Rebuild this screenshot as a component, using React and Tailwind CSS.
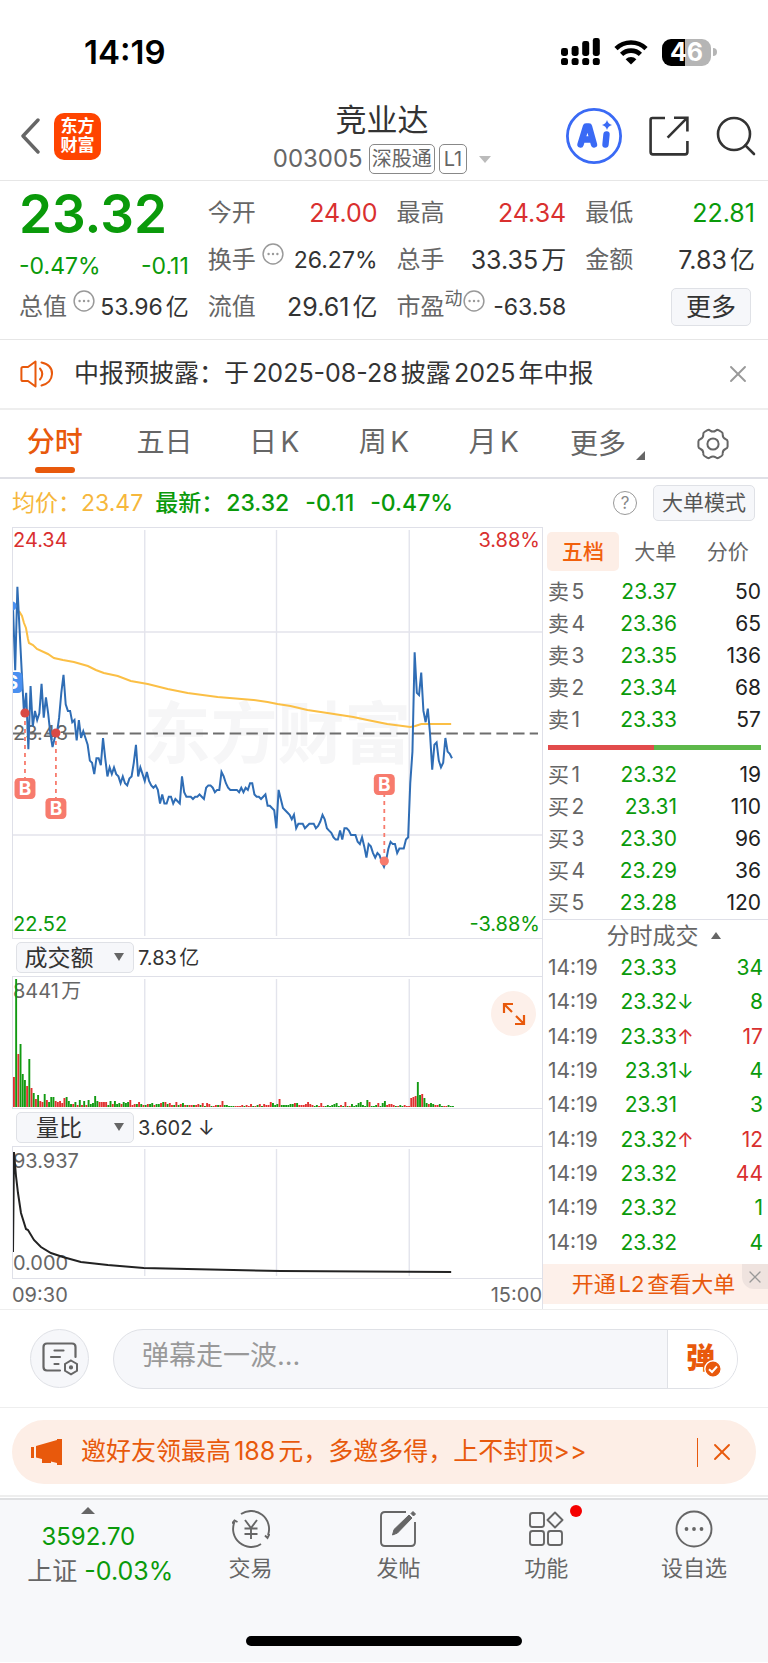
import { Search, X } from 'lucide-react'
import clsx from 'clsx'

// ── Market data ────────────────────────────────────────────────
// Minute prices, in cents from the previous close (23.43)
const PRICE_OFFSETS = [
    56, 28, 65, 46, 27, 9, 18, -7, 21, 3, 10, 6, 9, 22, 7, 16, 9, 0, -6, -2,
    0, 7, 18, 26, 13, 10, 10, 5, 6, -3, 6, -2, 1, -2, -5, -12, -13, -18, -11, -11,
    -14, -2, -11, -19, -15, -18, -15, -18, -19, -22, -19, -22, -23, -20, -19, -13, -5, -19, -15, -18,
    -21, -17, -21, -23, -24, -23, -25, -31, -27, -31, -31, -28, -28, -31, -29, -30, -31, -19, -26, -28,
    -28, -28, -29, -28, -28, -27, -28, -29, -24, -23, -23, -24, -26, -25, -25, -17, -19, -22, -24, -25,
    -25, -25, -25, -26, -24, -26, -24, -25, -22, -22, -27, -28, -28, -29, -28, -27, -32, -32, -33, -34,
    -42, -25, -29, -33, -34, -35, -36, -38, -36, -42, -40, -40, -40, -42, -41, -40, -40, -40, -42, -41,
    -39, -36, -38, -42, -43, -44, -46, -47, -47, -43, -47, -42, -42, -43, -45, -45, -45, -48, -49, -46,
    -50, -55, -49, -50, -53, -55, -53, -54, -57, -59, -56, -51, -48, -49, -49, -53, -51, -51, -51, -47,
    -46, -22, -8, 36, 18, 17, 27, 10, 5, 11, 0, -16, -5, -4, -12, -15, -13, -2, -8, -9,
    -11,
]

const AVERAGE_LINE =
    '6,83 9,88 11,95 13,100 15,111 16,115 20,117 24,121 35,126 41,130 50,132 61,134 75,138 83,142 91,145 105,148 118,153 135,156 155,161 175,165 205,169 241,172 255,174 265,176 278,178 295,182 315,185 341,189 355,192 375,196 398,199 403,198 409,196 439,196'

const RATIO_LINE =
    '0,105 1,5 3,29 5,46 8,66 13,82 15,83 21,93 28,100 38,106 50,110 68,115 95,118 131,121 175,122 268,124 439,125'

// Minute turnover, positive = falling (green), negative = rising (red)
const TURNOVER = [
    -30, 128, -53, 63, 33, 27, -21, 48, -19, 14, -8, 12, -6, -5, 13, -7, 5, 10, 10, -6,
    -5, -6, -4, -9, 10, 6, 3, -3, 5, -2, 7, -2, 6, -2, 7, 3, 4, 11, 6, -5,
    -5, -5, -5, 2, 6, -3, 6, 3, 4, -3, 5, 4, 5, -7, -2, -3, 3, -5, 3, -2,
    2, -3, 3, 4, -2, 3, 3, -4, 5, -5, 3, -4, -2, 2, -5, 2, -3, 4, -2, 2,
    -2, -2, 2, -2, -3, 2, -4, 1, -4, -3, 1, -1, -2, 2, -2, -6, 2, 2, 1, 1,
    1, -1, -1, -1, -2, 1, -2, -1, -3, 1, -1, 2, -3, 1, -3, -2, -2, -5, 4, 2,
    3, -8, 2, 2, 2, 2, 3, 3, -4, 4, -2, -2, -2, -3, -5, -3, -2, 1, 2, -1,
    -4, -1, 1, 2, 1, 2, 3, 4, 1, -2, 1, -5, 1, -1, 3, 1, 2, 4, 5, 2,
    1, 7, -5, 1, 1, 2, -4, 1, 4, 6, -2, -3, -3, -2, 1, -1, 2, 1, -2, -1,
    -1, -9, -10, -11, 25, 12, -13, 9, 4, -3, 4, 3, -2, -2, 3, 1, -1, -1, 2, 1,
    1,
]

const SELLS = [
    ['卖5', '23.37', 50],
    ['卖4', '23.36', 65],
    ['卖3', '23.35', 136],
    ['卖2', '23.34', 68],
    ['卖1', '23.33', 57],
]

const BUYS = [
    ['买1', '23.32', 19],
    ['买2', '23.31', 110],
    ['买3', '23.30', 96],
    ['买4', '23.29', 36],
    ['买5', '23.28', 120],
]

const TRADES = [
    { price: '23.33', volume: 34 },
    { price: '23.32', volume: 8, move: '↓' },
    { price: '23.33', volume: 17, move: '↑', up: true },
    { price: '23.31', volume: 4, move: '↓' },
    { price: '23.31', volume: 3 },
    { price: '23.32', volume: 12, move: '↑', up: true },
    { price: '23.32', volume: 44, up: true },
    { price: '23.32', volume: 1 },
    { price: '23.32', volume: 4 },
]

const STEP = 530 / 241

// ── Icons ──────────────────────────────────────────────────────
function DotsCircle({ className }) {
    return (
        <svg viewBox="0 0 24 24" fill="none" stroke="currentColor" className={className}>
            <circle cx="12" cy="12" r="10.8" strokeWidth="1.6" />
            <g fill="currentColor" stroke="none">
                <circle cx="7.2" cy="12" r="1.3" />
                <circle cx="12" cy="12" r="1.3" />
                <circle cx="16.8" cy="12" r="1.3" />
            </g>
        </svg>
    )
}

function Gear() {
    return (
        <svg viewBox="0 0 32 32" className="size-8" fill="none" stroke="#666" strokeWidth="2" strokeLinejoin="round">
            <path d="M10.5 2.2Q12 1.4 13.2 2.6Q16 4.6 18.8 2.6Q20 1.4 21.5 2.2L24.6 4Q26 4.9 25.7 6.6Q25.6 10 28.8 11.2Q30.6 11.8 30.6 13.4V18.6Q30.6 20.2 28.8 20.8Q25.6 22 25.7 25.4Q26 27.1 24.6 28L21.5 29.8Q20 30.6 18.8 29.4Q16 27.4 13.2 29.4Q12 30.6 10.5 29.8L7.4 28Q6 27.1 6.3 25.4Q6.4 22 3.2 20.8Q1.4 20.2 1.4 18.6V13.4Q1.4 11.8 3.2 11.2Q6.4 10 6.3 6.6Q6 4.9 7.4 4Z" />
            <circle cx="16" cy="16" r="5.6" />
        </svg>
    )
}

// ── Status bar and header ──────────────────────────────────────
function StatusBar() {
    return (
        <div className="flex h-[88px] items-center justify-between pt-4 pr-[51px] pl-[84px] text-black">
            <span className="text-[33px] leading-9 font-semibold">14:19</span>
            <div className="flex items-center gap-[14px]">
                <svg viewBox="0 0 40 28" className="h-7 w-10">
                    {[8, 10, 15, 18].map((h, i) => (
                        <g key={h}>
                            <rect x={1 + i * 10.6} y={18 - h} width="7" height={h} rx="2.4" />
                            <rect x={1 + i * 10.6} y="20" width="7" height="7" rx="2.6" />
                        </g>
                    ))}
                </svg>
                <svg viewBox="0 0 34 26" className="h-[26px] w-[34px]">
                    <g fill="none" stroke="#000" strokeWidth="4.6">
                        <path d="M2 9.6A21.5 21.5 0 0 1 32 9.6" />
                        <path d="M7.6 15.4A13.5 13.5 0 0 1 26.4 15.4" />
                    </g>
                    <path d="M17 25.6L11.6 20.2A7.8 7.8 0 0 1 22.4 20.2Z" />
                </svg>
                <div className="flex items-center">
                    <span className="flex h-[27px] w-[49px] items-center justify-center rounded-[9px] bg-linear-to-r from-black from-46% to-[#b5b5b5] to-46% text-[25px] leading-6 font-bold text-white">
                        46
                    </span>
                    <span className="ml-0.5 h-2 w-1 rounded-r-full bg-[#b5b5b5]" />
                </div>
            </div>
        </div>
    )
}

function Header() {
    return (
        <header className="grid h-[93px] grid-cols-[1fr_auto_1fr] items-center border-b border-[#e6e6e6] pt-1">
            <div className="flex items-center gap-[14px] pl-5">
                <button aria-label="返回">
                    <svg viewBox="0 0 20 36" className="h-9 w-5" fill="none" stroke="#666" strokeWidth="3.4" strokeLinecap="round" strokeLinejoin="round">
                        <path d="M18 2L3 18L18 34" />
                    </svg>
                </button>
                <a href="#home" className="flex size-[47px] flex-col items-center justify-center rounded-[10px] bg-[#ff4400] text-[17px] leading-[19px] font-bold text-white">
                    <span>东方</span>
                    <span>财富</span>
                </a>
            </div>
            <div className="flex flex-col items-center pr-1">
                <h1 className="text-[31px] leading-[46px] text-[#333]">竞业达</h1>
                <div className="flex items-center text-[#666]">
                    <span className="text-[24px] leading-8">003005</span>
                    <span className="ml-1.5 rounded-[5px] border border-[#888] px-0.5 text-[20px] leading-7">深股通</span>
                    <span className="ml-1 rounded-[5px] border border-[#888] px-1 text-[20px] leading-7">L1</span>
                    <svg viewBox="0 0 12 7" className="ml-3 h-[7px] w-3 fill-[#bbb]">
                        <path d="M0 0H12L6 7Z" />
                    </svg>
                </div>
            </div>
            <div className="flex items-center justify-end gap-[27px] pr-3">
                <button aria-label="AI">
                    <svg viewBox="0 0 56 56" className="size-14">
                        <circle cx="28" cy="28" r="26.6" fill="none" stroke="#3a6af5" strokeWidth="2.8" />
                        <g fill="none" stroke="#3a6af5" strokeLinecap="round" strokeLinejoin="round" strokeWidth="6.4">
                            <path d="M14.500 36.500L20 18.500H23L28 36.500M18 31.500H26" />
                            <path d="M40.500 26.500L39.500 36.500" />
                        </g>
                        <path d="M41 12Q42 16 46 17Q42 18 41 22Q40 18 36 17Q40 16 41 12Z" fill="#3a6af5" />
                    </svg>
                </button>
                <button aria-label="分享">
                    <svg viewBox="0 0 40 40" className="size-10" fill="none" stroke="#333" strokeWidth="2.6">
                        <path d="M16 2H3.4Q1.6 2 1.6 4V36Q1.6 38.4 4 38.4H36Q38.4 38.4 38.4 36V25" />
                        <path d="M18.6 21.6L37.6 2.4M25 1.8H38.4V15.6" />
                    </svg>
                </button>
                <button aria-label="搜索">
                    <Search className="-mx-1 size-12 text-[#333]" strokeWidth={1.3} />
                </button>
            </div>
        </header>
    )
}

// ── Quote summary ──────────────────────────────────────────────
function Stat({ label, value, tone = 'text-[#333]', hint, sup }) {
    return (
        <div className="flex items-center justify-between whitespace-nowrap">
            <span className="flex items-center text-[24px] text-[#666]">
                {label}
                {sup && <sup className="top-[-8px] text-[18px] leading-none">{sup}</sup>}
                {hint && <DotsCircle className={clsx('mb-3 size-[22px] text-[#999]', !sup && 'ml-1.5')} />}
            </span>
            <span className={clsx(tone, hint ? 'text-[23px]' : 'text-[25px]')}>{value}</span>
        </div>
    )
}

function Quote() {
    return (
        <section className="grid auto-rows-[47px] grid-cols-4 gap-x-[19px] border-b border-[#e6e6e6] pt-2 pr-[13px] pb-[9px] pl-[19px] leading-8">
            <div className="flex items-center pt-1 text-[53px] leading-[47px] font-semibold text-[#0a9a0a]">23.32</div>
            <Stat label="今开" value="24.00" tone="text-[#d9302f]" />
            <Stat label="最高" value="24.34" tone="text-[#d9302f]" />
            <Stat label="最低" value="22.81" tone="text-[#0a9a0a]" />
            <div className="flex items-center justify-between pt-3 text-[23px] text-[#0a9a0a]">
                <span>-0.47%</span>
                <span>-0.11</span>
            </div>
            <Stat label="换手" value="26.27%" hint />
            <Stat label="总手" value="33.35万" />
            <Stat label="金额" value="7.83亿" />
            <Stat label="总值" value="53.96亿" hint />
            <Stat label="流值" value="29.61亿" />
            <Stat label="市盈" sup="动" value="-63.58" hint />
            <div className="flex items-center justify-end pr-1">
                <button className="rounded-[5px] border border-[#dfe1e6] bg-[#f6f7fa] px-[14px] text-[25px] leading-9 text-[#333]">更多</button>
            </div>
        </section>
    )
}

function Notice() {
    return (
        <section className="flex h-[70px] items-center border-b-2 border-[#eee] pr-5 pl-5 text-[25px] text-[#333]">
            <svg viewBox="0 0 34 28" className="mr-5 h-7 w-[34px]" fill="none" stroke="#e8590c" strokeWidth="2" strokeLinejoin="round" strokeLinecap="round">
                <path d="M15.5 1.5V26.5L8 21H3Q1.4 21 1.4 19.4V8.6Q1.4 7 3 7H8Z" />
                <path d="M20 8.5Q24.5 14 20 19.5M21.5 2.5Q32.5 5 32 14T21.5 25.5" />
            </svg>
            <a href="#notice" className="flex-1">中报预披露：于2025-08-28披露2025年中报</a>
            <button aria-label="关闭">
                <X className="-mr-1 size-7 text-[#999]" strokeWidth={1.6} />
            </button>
        </section>
    )
}

function PeriodTabs() {
    return (
        <nav className="grid h-[69px] grid-cols-7 border-b-2 border-[#dfe0e6] text-[28px] text-[#666]">
            {['分时', '五日', '日K', '周K', '月K'].map((tab, i) => (
                <button
                    key={tab}
                    className={clsx(
                        'flex flex-col items-center justify-end pb-1',
                        i === 0 && 'font-medium text-[#e8590c]'
                    )}
                >
                    <span className="leading-[46px]">{tab}</span>
                    <span className={clsx('mt-0.5 h-1.5 w-10 rounded-full', i === 0 && 'bg-[#e8590c]')} />
                </button>
            ))}
            <button className="flex items-center justify-center pl-2">
                更多
                <svg viewBox="0 0 9 9" className="mt-6 ml-2.5 size-[9px] fill-[#666]">
                    <path d="M9 0V9H0Z" />
                </svg>
            </button>
            <button aria-label="设置" className="flex items-center justify-center">
                <Gear />
            </button>
        </nav>
    )
}

// ── Charts ─────────────────────────────────────────────────────
function GridColumns({ height }) {
    return (
        <g stroke="#e3e4ec" strokeWidth="1.4">
            {[132, 264, 397].map(x => (
                <line key={x} x1={x} x2={x} y1="2" y2={height - 2} />
            ))}
        </g>
    )
}

function Marker({ x, y, badgeY, letter, color, dot }) {
    const above = badgeY < y
    return (
        <g>
            <line x1={x} x2={x} y1={y} y2={above ? badgeY + 21 : badgeY} stroke={color} strokeWidth="1.8" strokeDasharray="4 4" />
            <circle cx={x} cy={y} r="4.6" fill={dot || color} />
            <rect x={x - 10.5} y={badgeY} width="21" height="21" rx="4.5" fill={color} />
            <text x={x} y={badgeY + 17} textAnchor="middle" fill="#fff" fontSize="19" fontWeight="700">
                {letter}
            </text>
        </g>
    )
}

function PriceChart() {
    const line = PRICE_OFFSETS.map((d, i) => `${(i * STEP).toFixed(1)},${(205.5 - d * 2.257).toFixed(1)}`).join(' ')
    return (
        <div className="relative border-y border-l border-[#dfe0e8] text-[20px] leading-6">
            <svg viewBox="0 0 530 410" preserveAspectRatio="none" className="block h-[410px] w-full">
                <text x="265" y="230" textAnchor="middle" fontSize="67" fontWeight="700" fill="#f6f6f7">
                    东方财富
                </text>
                <GridColumns height={410} />
                <path d="M0 104H530M0 307H530" stroke="#e3e4ec" strokeWidth="1.4" />
                <path d="M0 205.5H526" stroke="#6e6e6e" strokeWidth="2" strokeDasharray="11.5 5.2" />
                <text x="0" y="212" fontSize="20" fill="#666">23.43</text>
                <polyline points={AVERAGE_LINE} fill="none" stroke="#fbbf45" strokeWidth="2" />
                <polyline points={line} fill="none" stroke="#2f6db5" strokeWidth="2" />
                <Marker x={-1} y={78} badgeY={144} letter="S" color="#4a90f0" />
                <Marker x={12} y={185} badgeY={250} letter="B" color="#f77b6d" dot="#d94a45" />
                <Marker x={43} y={205} badgeY={270} letter="B" color="#f77b6d" dot="#d94a45" />
                <Marker x={372} y={333} badgeY={246} letter="B" color="#f77b6d" />
            </svg>
            <div className="absolute inset-0 flex flex-col justify-between pr-0.5">
                <div className="flex justify-between text-[#d9302f]">
                    <span>24.34</span>
                    <span>3.88%</span>
                </div>
                <div className="flex justify-between pb-0.5 text-[#0a9a0a]">
                    <span>22.52</span>
                    <span>-3.88%</span>
                </div>
            </div>
        </div>
    )
}

function IndicatorBar({ name, options, value }) {
    return (
        <div className="flex h-[37px] items-center gap-1 pl-1 text-[20px] text-[#333]">
            <div className="relative flex">
                <select
                    aria-label={name}
                    defaultValue={name}
                    className="h-[31px] w-[118px] appearance-none rounded-[5px] border border-[#dfe1e6] bg-[#f6f7fa] pr-8 text-center text-[23px] leading-7"
                >
                    {options.map(o => (
                        <option key={o}>{o}</option>
                    ))}
                </select>
                <svg viewBox="0 0 10 8" className="pointer-events-none absolute top-[11px] right-[10px] h-2 w-2.5 fill-[#666]">
                    <path d="M0 0H10L5 8Z" />
                </svg>
            </div>
            <span>{value}</span>
        </div>
    )
}

function TurnoverChart() {
    return (
        <div className="relative border-y border-l border-[#dfe0e8]">
            <svg viewBox="0 0 530 131" preserveAspectRatio="none" className="block h-[131px] w-full">
                <GridColumns height={131} />
                <text x="0" y="21" fontSize="20" fill="#666">8441万</text>
                {TURNOVER.map((v, i) => (
                    <rect
                        key={i}
                        x={i * STEP}
                        y={130 - Math.abs(v)}
                        width="1.9"
                        height={Math.abs(v)}
                        fill={v > 0 ? '#129a12' : '#e03131'}
                    />
                ))}
            </svg>
            <button aria-label="全屏" className="absolute top-[14px] right-1.5 flex size-[45px] items-center justify-center rounded-full bg-[#fdf0ea]">
                <svg viewBox="0 0 24 24" className="size-6" fill="none" stroke="#e8590c" strokeWidth="2.2">
                    <path d="M2 11V2H11M2 2L10 10M22 13V22H13M22 22L14 14" />
                </svg>
            </button>
        </div>
    )
}

function RatioChart() {
    return (
        <div className="border-y border-l border-[#dfe0e8]">
            <svg viewBox="0 0 530 131" preserveAspectRatio="none" className="block h-[131px] w-full">
                <GridColumns height={131} />
                <g fontSize="20" fill="#666">
                    <text x="0" y="21">93.937</text>
                    <text x="0" y="123">0.000</text>
                </g>
                <polyline points={RATIO_LINE} fill="none" stroke="#222" strokeWidth="2" />
            </svg>
        </div>
    )
}

// ── Order book ─────────────────────────────────────────────────
function BookTable({ rows }) {
    return (
        <table className="w-full table-fixed">
            <tbody>
                {rows.map(([side, price, volume]) => (
                    <tr key={side} className="h-8">
                        <td className="w-14 text-[#666]">{side}</td>
                        <td className="w-[73px] text-right text-[#0a9a0a]">{price}</td>
                        <td className="text-right text-[#222]">{volume}</td>
                    </tr>
                ))}
            </tbody>
        </table>
    )
}

function OrderPanel() {
    return (
        <aside className="flex w-[226px] shrink-0 flex-col border-l border-[#dfe0e8] text-[21px] leading-7">
            <div className="flex pr-1 pl-1 pt-[5px] text-[#666]">
                <button className="h-[39px] w-[72px] rounded-[5px] bg-[#fdeee6] font-medium text-[#f2600c]">五档</button>
                <button className="h-[39px] flex-1">大单</button>
                <button className="h-[39px] flex-1">分价</button>
            </div>
            <div className="pt-[5px] pr-[7px] pl-[5px]">
                <BookTable rows={SELLS} />
                <div className="flex h-[23px] items-center">
                    <div className="h-[5px] w-full bg-linear-to-r from-[#e24b4b] from-50% to-[#5db84a] to-50%" />
                </div>
                <BookTable rows={BUYS} />
            </div>
            <button className="flex h-8 items-center justify-center gap-3 border-t border-[#dfe0e8] pl-4 text-[23px] text-[#666]">
                分时成交
                <svg viewBox="0 0 10 7" className="h-[7px] w-2.5 fill-[#666]">
                    <path d="M0 7H10L5 0Z" />
                </svg>
            </button>
            <div className="pr-[5px] pl-[5px]">
                <table className="h-[309px] w-full table-fixed">
                    <tbody>
                        {TRADES.map((t, i) => (
                            <tr key={i}>
                                <td className="w-14 text-[#666]">14:19</td>
                                <td className="w-[73px] text-right text-[#0a9a0a]">{t.price}</td>
                                <td className={clsx('w-5 text-[20px]', t.up ? 'text-[#d9302f]' : 'text-[#0a9a0a]')}>{t.move}</td>
                                <td className={clsx('text-right', t.up ? 'text-[#d9302f]' : 'text-[#0a9a0a]')}>{t.volume}</td>
                            </tr>
                        ))}
                    </tbody>
                </table>
            </div>
            <div className="relative mt-auto mb-[5px] bg-[#fdf0ea]">
                <a href="#level2" className="block pr-1 text-center text-[22px] leading-[40px] text-[#e8590c]">
                    开通L2查看大单
                </a>
                <button aria-label="关闭" className="absolute top-0 right-0 flex h-[25px] w-[26px] items-center justify-center rounded-bl-[12px] bg-[#efe3df]">
                    <X className="size-5 text-[#999]" strokeWidth={1.6} />
                </button>
            </div>
        </aside>
    )
}

function ChartArea() {
    return (
        <section>
            <div className="flex h-12 items-center pr-[13px] pl-3 text-[23px] whitespace-nowrap">
                <span className="text-[#f6b73c]">均价：</span>
                <span className="text-[#f6b73c]">23.47</span>
                <span className="ml-3 font-medium text-[#0a9a0a]">最新：</span>
                <span className="ml-0.5 font-medium text-[#0a9a0a]">23.32</span>
                <span className="ml-4 font-medium text-[#0a9a0a]">-0.11</span>
                <span className="ml-4 font-medium text-[#0a9a0a]">-0.47%</span>
                <button className="ml-auto size-6 rounded-full border-[1.5px] border-[#999] text-[17px] leading-5 text-[#888]">?</button>
                <button className="ml-4 rounded-[5px] border border-[#dfe1e6] bg-[#f6f7fa] px-2 text-[21px] leading-[34px] text-[#555]">大单模式</button>
            </div>
            <div className="flex border-b border-[#eee]">
                <div className="min-w-0 flex-1 pl-3">
                    <PriceChart />
                    <IndicatorBar name="成交额" options={['成交额', '成交量']} value="7.83亿" />
                    <TurnoverChart />
                    <IndicatorBar name="量比" options={['量比', 'MACD']} value="3.602 ↓" />
                    <RatioChart />
                    <div className="flex h-[30px] items-center justify-between pt-0.5 text-[20px] text-[#666]">
                        <span>09:30</span>
                        <span>15:00</span>
                    </div>
                </div>
                <OrderPanel />
            </div>
        </section>
    )
}

// ── Comment box, promo, bottom bar ─────────────────────────────
function CommentBar() {
    return (
        <section className="flex h-[98px] items-center gap-6 border-b border-[#eee] pr-[30px] pl-[30px]">
            <button aria-label="弹幕设置" className="flex size-[59px] shrink-0 items-center justify-center rounded-full border border-[#dfe1e6] bg-[#f6f7fa]">
                <svg viewBox="0 0 36 34" className="h-[34px] w-9" fill="none" stroke="#666" strokeWidth="2.2" strokeLinecap="round">
                    <path d="M18 28.5H5Q1.5 28.5 1.5 25V5Q1.5 1.5 5 1.5H30Q33.5 1.5 33.5 5V15" />
                    <path d="M12.5 8.5H21.5M9 15H18M12.5 22H16.5" />
                    <path d="M29 18.5L35 22V28.8L29 32.4L23 28.8V22Z" strokeWidth="2" />
                    <circle cx="29" cy="25.4" r="1" />
                </svg>
            </button>
            <div className="flex h-[60px] flex-1 overflow-hidden rounded-full border border-[#dfe1e6] bg-[#f6f7fa]">
                <input
                    aria-label="弹幕"
                    placeholder="弹幕走一波..."
                    className="min-w-0 flex-1 pb-1 pl-7 text-[27px] outline-none placeholder:text-[#999]"
                />
                <button aria-label="发送弹幕" className="relative w-[70px] border-l border-[#dfe1e6] bg-white pr-1 text-[29px] font-black text-[#e8590c]">
                    弹
                    <svg viewBox="0 0 18 18" className="absolute right-[15px] bottom-2.5 size-[18px]">
                        <circle cx="9" cy="9" r="8.2" fill="#e8590c" stroke="#fff" strokeWidth="1.4" />
                        <path d="M5 9.2L8 12L13 6.5" fill="none" stroke="#fff" strokeWidth="2" />
                    </svg>
                </button>
            </div>
        </section>
    )
}

function Promo() {
    return (
        <section className="border-b-2 border-[#eee] px-3 pt-3 pb-[11px]">
            <div className="flex h-16 items-center rounded-full bg-[#fdeee6] pr-5 pl-[19px] text-[25px] text-[#e8590c]">
                <svg viewBox="0 0 32 26" className="mr-[18px] h-[26px] w-8" fill="#e8590c">
                    <path d="M0 8H3V19H0ZM5 7L26 1V0H31V26H26V24L20 22.5V24H11V20L5 18.5Z" />
                </svg>
                <a href="#invite" className="flex-1">邀好友领最高188元，多邀多得，上不封顶&gt;&gt;</a>
                <span className="mr-2.5 h-[29px] w-px bg-[#e8590c]" />
                <button aria-label="关闭">
                    <X className="size-7" strokeWidth={1.6} />
                </button>
            </div>
        </section>
    )
}

function NavItem({ label, dot, children }) {
    return (
        <button className="flex flex-1 flex-col items-center pt-[10px]">
            <span className="relative">
                <svg viewBox="0 0 38 38" className="size-[38px]" fill="none" stroke="#666" strokeWidth="1.9">
                    {children}
                </svg>
                {dot && <span className="absolute top-[-5px] right-[-17px] size-3 rounded-full bg-[#f50000]" />}
            </span>
            <span className="pt-1 text-[22px] leading-8 text-[#666]">{label}</span>
        </button>
    )
}

function BottomBar() {
    return (
        <footer className="mt-px border-t-2 border-[#dfe0e2] bg-[#f7f8fa]">
            <div className="flex h-[136px]">
                <button className="flex w-[23%] flex-col items-center pt-[7px] text-[24px] leading-[35px] text-[#0a9a0a]">
                    <svg viewBox="0 0 14 7" className="mb-[5px] h-[7px] w-[14px] fill-[#666]">
                        <path d="M0 7H14L7 0Z" />
                    </svg>
                    <span>3592.70</span>
                    <span className="pl-6 text-[25px]"><span className="text-[#666]">上证</span> -0.03%</span>
                </button>
                <NavItem label="交易">
                    <path d="M9 4A18 18 0 0 1 36 25M37.5 24L35.5 28L33 25.5M29 34A18 18 0 0 1 2.5 12M0 13.5L2.5 10.5L5.5 12" />
                    <path d="M13 10L19 18L25 10M19 18V29M12.5 18.5H25.5M12.5 24H25.5" />
                </NavItem>
                <NavItem label="发帖">
                    <path d="M27 2H6Q2 2 2 6V32Q2 36 6 36H32Q36 36 36 32V12" />
                    <path d="M13.5 25L15 19.5L30 5L33 8L18.5 23ZM32 3.5L34 1.5L36.5 4L34.5 6Z" fill="#666" strokeWidth="1" />
                </NavItem>
                <NavItem label="功能" dot>
                    <rect x="3" y="3" width="14" height="14" rx="2.5" />
                    <rect x="3" y="21" width="14" height="14" rx="2.5" />
                    <rect x="21" y="21" width="14" height="14" rx="2.5" />
                    <path d="M28 2.5L35.5 10L28 17.5L20.5 10Z" strokeLinejoin="round" />
                </NavItem>
                <NavItem label="设自选">
                    <circle cx="19" cy="19" r="17.5" />
                    <g fill="#666" stroke="none">
                        <circle cx="11.5" cy="19" r="1.9" />
                        <circle cx="19" cy="19" r="1.9" />
                        <circle cx="26.5" cy="19" r="1.9" />
                    </g>
                </NavItem>
            </div>
            <div className="flex justify-center pb-4">
                <div className="h-[10px] w-[36%] rounded-full bg-black" />
            </div>
        </footer>
    )
}

export default function App() {
    return (
        <div className="min-h-screen bg-white font-['Inter','Noto_Sans_CJK_SC',sans-serif] [text-autospace:normal]">
            <StatusBar />
            <Header />
            <Quote />
            <Notice />
            <PeriodTabs />
            <ChartArea />
            <CommentBar />
            <Promo />
            <BottomBar />
        </div>
    )
}
